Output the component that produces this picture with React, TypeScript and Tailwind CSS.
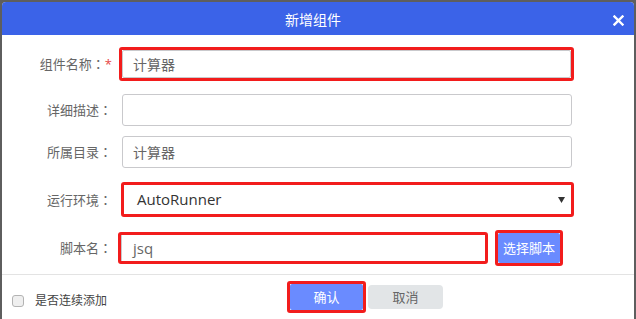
import React from "react";

const Colon = () => <span className="font-['Noto_Sans_CJK_TC',sans-serif]">：</span>;

export default function App() {
  return (
    <div className="w-[636px] h-[319px] bg-[#5e5e5e] pt-[2px] px-[2px] overflow-hidden font-['Open_Sans','Noto_Sans_CJK_SC',sans-serif]">
      <div className="w-[632px] h-[317px] bg-white rounded-t-[4px] overflow-hidden flex flex-col">
        {/* Header */}
        <div className="relative h-[33px] bg-[#3b63e8] flex items-center justify-center text-white text-[14px] leading-none">
          <span className="pr-[10px] font-['Noto_Sans_CJK_SC',sans-serif]">新增组件</span>
          <svg className="absolute right-[10px] top-[13px]" width="11" height="11" viewBox="0 0 11 11">
            <path d="M1.5 1.5 L9.5 9.5 M9.5 1.5 L1.5 9.5" stroke="white" strokeWidth="2.4" strokeLinecap="square" />
          </svg>
        </div>

        {/* Row 1 */}
        <div className="flex items-center mt-[12px] h-[34px]">
          <div className="w-[110px] text-right text-[13px] text-[#666] leading-none">
            组件名称<Colon /><span className="text-[#e64545]">*</span>
          </div>
          <div className="ml-[7px] w-[455px] h-[34px] border-[3px] border-[#f21c1c] rounded-[3px]">
            <div className="h-full border border-[#c9c9cc] rounded-[2px] flex items-center pl-[10px] text-[14px] text-[#666]">
              计算器
            </div>
          </div>
        </div>

        {/* Row 2 */}
        <div className="flex items-center mt-[13px] h-[32px]">
          <div className="w-[110px] text-right text-[13px] text-[#666] leading-none">详细描述<Colon /></div>
          <div className="ml-[10px] w-[450px] h-[32px] border border-[#c9c9cc] rounded-[3px]" />
        </div>

        {/* Row 3 */}
        <div className="flex items-center mt-[10px] h-[32px]">
          <div className="w-[110px] text-right text-[13px] text-[#666] leading-none">所属目录<Colon /></div>
          <div className="ml-[10px] w-[450px] h-[32px] border border-[#c9c9cc] rounded-[3px] flex items-center pl-[10px] text-[14px] text-[#666]">
            计算器
          </div>
        </div>

        {/* Row 4 */}
        <div className="flex items-center mt-[14px] h-[35px]">
          <div className="w-[110px] text-right text-[13px] text-[#666] leading-none">运行环境<Colon /></div>
          <div className="ml-[9px] w-[453px] h-[35px] border-[3px] border-[#f21c1c] rounded-[3px]">
            <div className="h-full flex items-center justify-between pl-[13px] pr-[6px] text-[15px] text-[#333]">
              <span>AutoRunner</span>
              <svg width="7" height="6" viewBox="0 0 7 6">
                <path d="M0 0 H7 L3.5 6 Z" fill="#333" />
              </svg>
            </div>
          </div>
        </div>

        {/* Row 5 */}
        <div className="flex items-center mt-[13px] h-[36px]">
          <div className="w-[110px] text-right text-[13px] text-[#666] leading-none">脚本名<Colon /></div>
          <div className="ml-[6px] w-[370px] h-[32px] border-[3px] border-[#f21c1c] rounded-[3px]">
            <div className="h-full border-l border-[#c9c9cc] flex items-center pl-[11px] text-[15px] text-[#666]">
              jsq
            </div>
          </div>
          <div className="ml-[7px] w-[68px] h-[36px] border-[3px] border-[#f21c1c] rounded-[3px] bg-white">
            <div className="h-full bg-[#6a8bff] rounded-[2px] flex items-center justify-center text-white text-[13px] leading-none">
              选择脚本
            </div>
          </div>
        </div>

        {/* Divider */}
        <div className="mt-[8px] border-t border-[#e3e3e3]" />

        {/* Footer */}
        <div className="flex items-center h-[44px]">
          <div className="w-[285px] flex items-center pl-[10px] mt-[8px]">
            <div className="w-[12px] h-[12px] rounded-[3px] border border-[#b3b3b3] bg-[#efefef]" />
            <span className="ml-[11px] text-[12px] text-[#444] leading-none">是否连续添加</span>
          </div>
          <div className="w-[79px] h-[32px] border-[3px] border-[#f21c1c] rounded-[3px]">
            <div className="h-full bg-[#6a8bff] rounded-[2px] flex items-center justify-center text-white text-[13px] leading-none">
              确认
            </div>
          </div>
          <div className="ml-[2px] w-[75px] h-[24px] bg-[#e2e5e7] rounded-[4px] flex items-center justify-center text-[#666] text-[13px] leading-none">
            取消
          </div>
        </div>
      </div>
    </div>
  );
}
